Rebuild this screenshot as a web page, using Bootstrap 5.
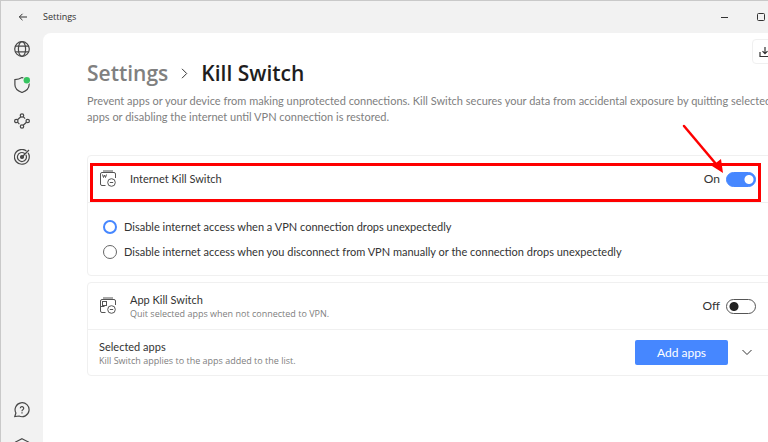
<!DOCTYPE html>
<html lang="en">
<head>
<meta charset="utf-8">
<meta name="viewport" content="width=device-width, initial-scale=1">
<title>Settings</title>
<link href="https://cdn.jsdelivr.net/npm/bootstrap@5.3.0/dist/css/bootstrap.min.css" rel="stylesheet">
<style>
:root { --ink: #333; --muted: #808080; --accent: #4687ff; --line: #f0f0f0; --mark-red: #fe0000; }
body { font-family: Lato, "Open Sans", sans-serif; font-size: 11px; line-height: 16px; color: var(--ink); background: #f2f2f2; }
svg { display: block; fill: none; stroke: currentColor; flex: none; }
.app-window { border-top: 1px solid #c9c9c9; border-left: 1px solid #c9c9c9; }
.title-bar { height: 32px; padding: 0 2px 0 14px; }
.title-text { font-family: "Open Sans", sans-serif; font-size: 9px; }
.plain-btn { background: none; border: 0; padding: 0; color: inherit; }
.side-bar { flex: none; width: 42px; padding: 8px 0 0; gap: 20px; }
.side-bar a { color: #484848; }
.side-foot { gap: 20px; margin-bottom: -12px; }
.main-panel { min-width: 0; background: #fff; border-top-left-radius: 8px; padding: 6px 0 0 44px; }
.bleed { margin-right: -16px; }
.page-title { font-family: "Open Sans", sans-serif; font-size: 21px; line-height: 28px; font-weight: 600; margin-top: 20px; gap: 13px; }
.page-title a, .intro { color: var(--muted); }
.page-title span { color: #1e1e1e; }
.intro { margin: 6px 8px 30px 0; }
.tray-btn { width: 32px; height: 25px; border: 1px solid var(--line); border-radius: 4px; padding-left: 6px; background: #fff; color: var(--ink); }
.panel-card { border: 1px solid var(--line); border-radius: 4px; background: #fff; margin-bottom: 6px; }
.panel-row { height: 46px; padding: 0 27px 0 11px; }
.panel-row + .panel-row, .choices { border-top: 1px solid var(--line); }
.row-icon { color: #555; margin-right: 13px; }
.sub { font-family: "Open Sans", sans-serif; font-size: 9px; line-height: 13px; color: var(--muted); }
.top-label { line-height: 15px; }
.choices { padding: 16px 15px 15px; gap: 9px; }
.choice { gap: 7px; }
.choice input { appearance: none; width: 14px; height: 14px; border: 1px solid #666; border-radius: 50%; margin: 0; flex: none; }
.choice input:checked { border: 2px solid var(--accent); }
.toggle { gap: 6px; }
.toggle input { appearance: none; width: 30px; height: 15px; border: 1px solid #555; border-radius: 8px; margin: 0; background: radial-gradient(circle at 7px 50%, #222 4px, transparent 5px); }
.toggle input:checked { border-color: var(--accent); background: radial-gradient(circle at 22px 50%, #fff 4px, transparent 5px) var(--accent); }
.toggle label, .add-btn { font-size: 12px; }
.add-btn { width: 93px; height: 25px; background: var(--accent); color: #fff; line-height: 16px; padding: 0; border: 0; border-radius: 2px; }
.expand-btn { margin: 0 4px 0 14px; }
.callout-box { position: absolute; inset: 7px 22px 0 2px; border: 3px solid var(--mark-red); pointer-events: none; }
.callout-arrow { position: absolute; right: 59px; top: -32px; color: var(--mark-red); pointer-events: none; }
</style>
</head>
<body>
<div class="app-window d-flex flex-column vh-100 overflow-hidden">
  <header class="title-bar d-flex align-items-center">
    <button class="plain-btn" type="button" aria-label="Back"><svg width="16" height="12" viewBox="0 0 16 12"><path d="M12 6H4.500M7.500 2.800 4.300 6l3.200 3.200"/></svg></button>
    <span class="title-text ms-2 ps-1">Settings</span>
    <button class="plain-btn ms-auto" type="button" aria-label="Minimize"><svg width="8" height="8" viewBox="0 0 8 8"><path d="M0 4.500h7"/></svg></button>
    <button class="plain-btn ms-4 ps-1" type="button" aria-label="Maximize"><svg width="9" height="9" viewBox="0 0 9 9"><rect x=".5" y=".5" width="7" height="7" rx="1"/></svg></button>
  </header>
  <div class="d-flex flex-fill">
    <nav class="side-bar d-flex flex-column align-items-center" aria-label="Main">
      <a href="#" aria-label="Locations"><svg width="16" height="16" viewBox="0 0 16 16" stroke-width="1.200"><circle cx="8" cy="8" r="7.300"/><ellipse cx="8" cy="8" rx="3.600" ry="7.300"/><path d="M1.200 5.200h13.600M1.200 10.800h13.600"/></svg></a>
      <a href="#" aria-label="Protection"><svg width="16" height="16" viewBox="0 0 16 16" stroke-width="1.200"><path d="M8 .600C6 1.900 3.700 2.600.900 2.700v5c0 3.800 2.600 6.100 7.100 7.800 4.500-1.700 7.100-4 7.100-7.800v-5C12.300 2.600 10 1.900 8 .600z"/><circle cx="12.800" cy="3.300" r="4" fill="#f2f2f2" stroke="none"/><circle cx="12.800" cy="3.300" r="3.200" fill="#37c460" stroke="none"/></svg></a>
      <a href="#" aria-label="Meshnet"><svg width="16" height="16" viewBox="0 0 16 16" stroke-width="1.200"><circle cx="8" cy="2.500" r="1.700"/><circle cx="8" cy="13.500" r="1.700"/><circle cx="2.300" cy="8" r="1.700"/><circle cx="13.700" cy="8" r="1.700"/><path d="M6.800 3.700 3.500 6.800M9.200 3.700l1.900 1.900M12.500 9.200l-3.300 3.100M3.500 9.200l1.900 1.900"/></svg></a>
      <a href="#" aria-label="Threat protection"><svg width="16" height="16" viewBox="0 0 16 16" stroke-width="1.200"><path d="M12.500 2.100a7.400 7.400 0 1 0 1.600 1.800M10.600 4.400a4.500 4.500 0 1 0 1.300 1.500M8 8l7-7"/><circle cx="8" cy="8" r="1.500" fill="currentColor"/></svg></a>
      <div class="side-foot mt-auto d-flex flex-column">
        <a href="#" aria-label="Help"><svg width="16" height="16" viewBox="0 0 16 16" stroke-width="1.200"><path d="M.800 14.500 1.900 11A7 7 0 1 1 5 14z"/><path d="M6.300 6.300a1.700 1.700 0 1 1 2.500 1.500c-.600.300-.800.700-.800 1.400M8 10.200v1.200"/></svg></a>
        <a href="#" aria-label="Settings"><svg width="16" height="16" viewBox="0 0 16 16" stroke-width="1.200"><path d="M8 .700 14.500 4v8L8 15.300 1.500 12V4z"/><circle cx="8" cy="8" r="2.500"/></svg></a>
      </div>
    </nav>
    <main class="main-panel flex-fill">
      <div class="bleed">
        <div class="d-flex align-items-start justify-content-between">
          <h1 class="page-title d-flex align-items-center mb-0">
            <a class="text-decoration-none" href="#">Settings</a>
            <svg width="7" height="11" viewBox="0 0 7 11"><path d="m1 .800 4.700 4.700L1 10.200"/></svg>
            <span>Kill Switch</span>
          </h1>
          <button class="tray-btn" type="button" aria-label="Download"><svg width="12" height="12" viewBox="0 0 12 12" stroke-width="1.200"><path d="M1 6v4.500h10V6M6 1v6.500M3.500 5.200 6 7.700l2.500-2.500"/></svg></button>
        </div>
        <p class="intro">Prevent apps or your device from making unprotected connections. Kill Switch secures your data from accidental exposure by quitting selected apps or disabling the internet until VPN connection is restored.</p>
        <section class="panel-card">
          <div class="panel-row d-flex align-items-center position-relative">
            <svg class="row-icon" width="18" height="18" viewBox="0 0 18 18"><path d="M6.500 15.500H3a1.500 1.500 0 0 1-1.500-1.500V4A1.500 1.500 0 0 1 3 2.500h12A1.500 1.500 0 0 1 16.500 4v4M4 1h10"/><path d="m3.500 4.500 1 3 1-2.500 1 2.500 1-3"/><circle cx="12.500" cy="12.500" r="3.800"/><path d="M10.800 12.500h3.400"/></svg>
            <label for="netSwitch">Internet Kill Switch</label>
            <div class="toggle d-flex align-items-center ms-auto"><label for="netSwitch">On</label><input id="netSwitch" type="checkbox" role="switch" checked></div>
            <div class="callout-box"></div>
            <svg class="callout-arrow" width="42" height="50" viewBox="0 0 42 50"><path d="M2 2l32 38" stroke-width="2.500" stroke-linecap="round"/><path d="M41 49 30 42l9-7z" fill="currentColor" stroke="none"/></svg>
          </div>
          <div class="choices d-flex flex-column">
            <div class="choice d-flex align-items-center"><input id="dropOnly" type="radio" name="mode" checked><label for="dropOnly">Disable internet access when a VPN connection drops unexpectedly</label></div>
            <div class="choice d-flex align-items-center"><input id="dropManual" type="radio" name="mode"><label for="dropManual">Disable internet access when you disconnect from VPN manually or the connection drops unexpectedly</label></div>
          </div>
        </section>
        <section class="panel-card">
          <div class="panel-row d-flex align-items-center">
            <svg class="row-icon" width="18" height="18" viewBox="0 0 18 18"><path d="M6.500 15.500H3a1.500 1.500 0 0 1-1.500-1.500V4A1.500 1.500 0 0 1 3 2.500h12A1.500 1.500 0 0 1 16.500 4v4M4 1h10"/><rect x="3.500" y="4.500" width="4" height="4"/><path d="M1.500 9.500h4"/><circle cx="12.500" cy="12.500" r="3.800"/><path d="M10.800 12.500h3.400"/></svg>
            <div><label class="top-label d-block" for="appSwitch">App Kill Switch</label><div class="sub">Quit selected apps when not connected to VPN.</div></div>
            <div class="toggle d-flex align-items-center ms-auto"><label for="appSwitch">Off</label><input id="appSwitch" type="checkbox" role="switch"></div>
          </div>
          <div class="panel-row d-flex align-items-center">
            <div><div class="top-label">Selected apps</div><div class="sub">Kill Switch applies to the apps added to the list.</div></div>
            <button class="btn add-btn ms-auto" type="button">Add apps</button>
            <button class="plain-btn expand-btn" type="button" aria-label="Expand"><svg width="10" height="7" viewBox="0 0 10 7"><path d="m.500 1 4.500 4.500L9.500 1"/></svg></button>
          </div>
        </section>
      </div>
    </main>
  </div>
</div>
<script src="https://cdn.jsdelivr.net/npm/bootstrap@5.3.0/dist/js/bootstrap.bundle.min.js"></script>
</body>
</html>
